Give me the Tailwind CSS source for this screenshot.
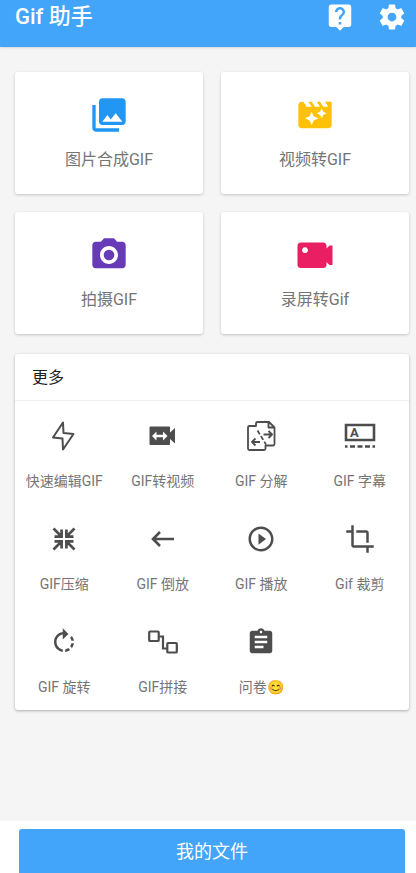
<!DOCTYPE html>
<html lang="zh-CN">
<head>
<meta charset="utf-8">
<meta name="viewport" content="width=device-width, initial-scale=1">
<title>Gif 助手</title>
<script src="https://cdn.jsdelivr.net/npm/@tailwindcss/browser@4"></script>
</head>
<body class="flex min-h-screen flex-col bg-[#f5f5f5] font-[Roboto,'Noto_Sans_CJK_SC',sans-serif] text-[#757575]">
<header class="flex items-center bg-[#42a5f9] pt-[2px] pr-[9px] pb-[15px] pl-[15px] text-white shadow-sm">
  <h1 class="flex-1 text-[22px] leading-[30px] font-medium">Gif 助手</h1>
  <div class="flex gap-[22px]">
    <button type="button" aria-label="帮助"><svg class="size-[30px]" viewBox="0 0 24 24" fill="currentColor"><path d="M19 2H5c-1.110 0-2 .9-2 2v14c0 1.100.89 2 2 2h4l3 3 3-3h4c1.100 0 2-.9 2-2V4c0-1.100-.9-2-2-2zm-6 16h-2v-2h2v2zm2.070-7.750l-.9.92C13.450 11.900 13 12.500 13 14h-2v-.5c0-1.100.45-2.100 1.170-2.830l1.240-1.260c.37-.36.59-.86.59-1.410 0-1.100-.9-2-2-2s-2 .9-2 2H8c0-2.210 1.790-4 4-4s4 1.790 4 4c0 .88-.36 1.680-.93 2.250z"/></svg></button>
    <button type="button" aria-label="设置"><svg class="size-[30px]" viewBox="0 0 24 24" fill="currentColor"><path d="M19.430 12.980c.04-.32.07-.64.07-.98s-.03-.66-.07-.98l2.110-1.650c.19-.15.24-.42.12-.64l-2-3.460c-.12-.22-.39-.3-.61-.22l-2.490 1c-.52-.4-1.080-.73-1.690-.98l-.38-2.650C14.460 2.180 14.250 2 14 2h-4c-.25 0-.46.18-.49.42l-.38 2.650c-.61.25-1.170.59-1.690.98l-2.490-1c-.23-.09-.49 0-.61.22l-2 3.460c-.13.22-.07.49.12.64l2.110 1.650c-.04.32-.07.65-.07.98s.03.66.07.98l-2.110 1.650c-.19.15-.24.42-.12.64l2 3.460c.12.22.39.3.61.22l2.490-1c.52.4 1.080.73 1.690.98l.38 2.650c.03.24.24.42.49.42h4c.25 0 .46-.18.49-.42l.38-2.650c.61-.25 1.170-.59 1.690-.98l2.490 1c.23.09.49 0 .61-.22l2-3.460c.12-.22.07-.49-.12-.64l-2.110-1.650zM12 15.500c-1.930 0-3.500-1.570-3.500-3.500s1.570-3.500 3.500-3.500 3.500 1.570 3.500 3.500-1.570 3.500-3.500 3.500z"/></svg></button>
  </div>
</header>

<main class="flex flex-1 flex-col gap-5 pt-[25px] pr-[7px] pb-5 pl-[15px]">
  <div class="grid grid-cols-2 gap-[18px]">
    <button type="button" class="flex flex-col items-center gap-[13px] rounded-[3px] bg-white pt-[23px] pb-[22px] shadow-[0_1px_3px_rgba(0,0,0,0.2)]">
      <svg class="size-10 text-[#2196f3]" viewBox="0 0 24 24" fill="currentColor"><path d="M22 16V4c0-1.100-.9-2-2-2H8c-1.100 0-2 .9-2 2v12c0 1.100.9 2 2 2h12c1.100 0 2-.9 2-2zm-11-4l2.030 2.710L16 11l4 5H8l3-4zM2 6v14c0 1.100.9 2 2 2h14v-2H4V6H2z"/></svg>
      <span class="text-base">图片合成GIF</span>
    </button>
    <button type="button" class="flex flex-col items-center gap-[13px] rounded-[3px] bg-white pt-[23px] pb-[22px] shadow-[0_1px_3px_rgba(0,0,0,0.2)]">
      <svg class="size-10 text-[#ffc107]" viewBox="0 0 24 24" fill="currentColor"><path d="M18 4l2 3h-3l-2-3h-2l2 3h-3l-2-3H8l2 3H7L5 4H4c-1.100 0-1.990.9-1.990 2L2 18c0 1.100.9 2 2 2h16c1.100 0 2-.9 2-2V4h-4zm-6.750 11.250L10 18l-1.250-2.750L6 14l2.750-1.250L10 10l1.250 2.750L14 14l-2.750 1.250zm5.690-3.310L16 14l-.94-2.060L13 11l2.060-.94L16 8l.94 2.060L19 11l-2.060.94z"/></svg>
      <span class="text-base">视频转GIF</span>
    </button>
    <button type="button" class="flex flex-col items-center gap-[13px] rounded-[3px] bg-white pt-[23px] pb-[22px] shadow-[0_1px_3px_rgba(0,0,0,0.2)]">
      <svg class="size-10 text-[#673ab7]" viewBox="0 0 24 24" fill="currentColor"><circle cx="12" cy="12" r="3.200"/><path d="M9 2L7.170 4H4c-1.100 0-2 .9-2 2v12c0 1.100.9 2 2 2h16c1.100 0 2-.9 2-2V6c0-1.100-.9-2-2-2h-3.170L15 2H9zm3 15.400c-2.980 0-5.400-2.420-5.400-5.400s2.420-5.400 5.400-5.400 5.400 2.420 5.400 5.400-2.420 5.400-5.400 5.400z"/></svg>
      <span class="text-base">拍摄GIF</span>
    </button>
    <button type="button" class="flex flex-col items-center gap-[13px] rounded-[3px] bg-white pt-[23px] pb-[22px] shadow-[0_1px_3px_rgba(0,0,0,0.2)]">
      <svg class="size-10 text-[#e91e63]" viewBox="0 0 40 40" fill="currentColor"><path fill-rule="evenodd" d="M6 7.500H28Q31.500 7.500 31.500 11V13.500L34.500 10.500H37.500V30H34.500L31.500 27V29.500Q31.500 33 28 33H6Q2.500 33 2.500 29.500V11Q2.500 7.500 6 7.500zM10 12.300a2.900 2.900 0 1 0 .01 0z"/></svg>
      <span class="text-base">录屏转Gif</span>
    </button>
  </div>

  <section class="rounded-[3px] bg-white shadow-[0_1px_3px_rgba(0,0,0,0.3)]">
    <h2 class="border-b border-[#f0f0f0] px-[17px] pt-3 pb-[10px] text-base text-[#212121]">更多</h2>
    <div class="grid grid-cols-4 text-sm text-[#757575]">
      <button type="button" class="flex flex-col items-center gap-5 pt-5 pb-[13px]">
        <svg class="size-[30px] text-[#4d4d4d]" viewBox="0 0 30 30" fill="none" stroke="currentColor" stroke-width="2" stroke-linejoin="round"><path d="M14 1.500L4 16.500L13.500 17.500L14 28.500L24.500 13L14.500 12z"/></svg>
        <span>快速编辑GIF</span>
      </button>
      <button type="button" class="flex flex-col items-center gap-5 pt-5 pb-[13px]">
        <svg class="size-[30px] text-[#4d4d4d]" viewBox="0 0 30 30" fill="currentColor"><path d="M2.500 5.500h18.500q1 0 1 1v5l5-4.500v15.500l-5-4.500v5q0 1-1 1H2.500q-1 0-1-1V6.500q0-1 1-1z"/><path fill="#fff" d="M4 15l4.500-4.500v3.200h6.500v-3.200l4.500 4.500-4.500 4.500v-3.200H8.500v3.200z"/></svg>
        <span>GIF转视频</span>
      </button>
      <button type="button" class="flex flex-col items-center gap-5 pt-5 pb-[13px]">
        <svg class="size-[30px] text-[#4d4d4d]" viewBox="0 0 30 30" fill="none" stroke="currentColor" stroke-width="1.800" stroke-linejoin="round"><path d="M10 5H3.500Q2 5 2 6.500V27.500Q2 29 3.500 29H18Q19.500 29 19.500 27.500V24.500H27Q28.500 24.500 28.500 23V6.500L23 1H11.500Q10 1 10 2.500V5zM22.500 1.500V6.500H28"/><path d="M11.500 9.500L20 23.500" stroke-dasharray="4.500 2"/><path d="M17.500 13.500H26M22.500 10L26 13.500L22.500 17M14 21H6M9.500 17.500L6 21L9.500 24.500"/></svg>
        <span>GIF 分解</span>
      </button>
      <button type="button" class="flex flex-col items-center gap-5 pt-5 pb-[13px]">
        <svg class="size-[30px] overflow-visible text-[#4d4d4d]" viewBox="0 0 30 30" fill="none" stroke="currentColor" stroke-width="2.600"><path d="M1 4H29V19H1z"/><path d="M0 25.500H2.500M5 25.500H10M12.500 25.500H17.500M20 25.500H25M27.500 25.500H30"/><text x="5" y="16" class="text-[13px] font-bold" fill="currentColor" stroke="none">A</text></svg>
        <span>GIF 字幕</span>
      </button>
      <button type="button" class="flex flex-col items-center gap-5 pt-5 pb-[13px]">
        <svg class="size-[30px] text-[#4d4d4d]" viewBox="0 0 30 30" fill="none" stroke="currentColor" stroke-width="2.700"><path d="M4.500 4.500L12 12M5.500 12.600H12.600V5.500M25.500 4.500L18 12M24.500 12.600H17.400V5.500M4.500 25.500L12 18M5.500 17.400H12.600V24.500M25.500 25.500L18 18M24.500 17.400H17.400V24.500"/></svg>
        <span>GIF压缩</span>
      </button>
      <button type="button" class="flex flex-col items-center gap-5 pt-5 pb-[13px]">
        <svg class="size-[30px] text-[#4d4d4d]" viewBox="0 0 30 30" fill="none" stroke="currentColor" stroke-width="2.600"><path d="M26 15H5.500M12 8L5 15L12 22"/></svg>
        <span>GIF 倒放</span>
      </button>
      <button type="button" class="flex flex-col items-center gap-5 pt-5 pb-[13px]">
        <svg class="size-[30px] text-[#4d4d4d]" viewBox="0 0 24 24" fill="currentColor"><path d="M10 16.500l6-4.500-6-4.500v9zM12 2C6.480 2 2 6.480 2 12s4.480 10 10 10 10-4.480 10-10S17.520 2 12 2zm0 18c-4.410 0-8-3.590-8-8s3.590-8 8-8 8 3.590 8 8-3.590 8-8 8z"/></svg>
        <span>GIF 播放</span>
      </button>
      <button type="button" class="flex flex-col items-center gap-5 pt-5 pb-[13px]">
        <svg class="size-[30px] text-[#4d4d4d]" viewBox="0 0 24 24" fill="currentColor"><path d="M17 15h2V7c0-1.100-.9-2-2-2H9v2h8v8zM7 17V1H5v4H1v2h4v10c0 1.100.9 2 2 2h10v4h2v-4h4v-2H7z"/></svg>
        <span>Gif 裁剪</span>
      </button>
      <button type="button" class="flex flex-col items-center gap-5 pt-5 pb-[13px]">
        <svg class="size-[30px] text-[#4d4d4d]" viewBox="0 0 24 24" fill="currentColor"><path d="M15.550 5.550L11 1v3.070C7.060 4.560 4 7.920 4 12s3.050 7.440 7 7.930v-2.020c-2.840-.48-5-2.940-5-5.910s2.160-5.430 5-5.910V10l4.550-4.450zM19.930 11c-.17-1.390-.72-2.730-1.620-3.890l-1.420 1.420c.54.75.88 1.600 1.020 2.470h2.020zM13 17.900v2.020c1.390-.17 2.740-.71 3.900-1.610l-1.440-1.440c-.75.54-1.590.89-2.460 1.030zm3.890-2.420l1.420 1.410c.9-1.160 1.450-2.500 1.620-3.890h-2.020c-.14.87-.48 1.720-1.020 2.480z"/></svg>
        <span>GIF 旋转</span>
      </button>
      <button type="button" class="flex flex-col items-center gap-5 pt-5 pb-[13px]">
        <svg class="size-[30px] text-[#4d4d4d]" viewBox="0 0 30 30" fill="none" stroke="currentColor" stroke-width="2.200"><rect x="1.200" y="4.500" width="9.500" height="9.500" rx=".8"/><rect x="19.300" y="16" width="9.500" height="9.500" rx=".8"/><path d="M10.500 9.500H15V21.500H19.500"/></svg>
        <span>GIF拼接</span>
      </button>
      <button type="button" class="flex flex-col items-center gap-5 pt-5 pb-[13px]">
        <svg class="size-[30px] text-[#4d4d4d]" viewBox="0 0 24 24" fill="currentColor"><path d="M19 3h-4.180C14.400 1.840 13.300 1 12 1c-1.300 0-2.400.84-2.820 2H5c-1.100 0-2 .9-2 2v14c0 1.100.9 2 2 2h14c1.100 0 2-.9 2-2V5c0-1.100-.9-2-2-2zm-7 0c.55 0 1 .45 1 1s-.45 1-1 1-1-.45-1-1 .45-1 1-1zm2 14H7v-2h7v2zm3-4H7v-2h10v2zm0-4H7V7h10v2z"/></svg>
        <span>问卷😊</span>
      </button>
    </div>
  </section>
</main>

<footer class="bg-white pt-2 pr-[11px] pl-[19px]">
  <button type="button" class="block w-full rounded-t-[3px] bg-[#42a5f9] pt-[9px] pb-[7px] text-lg text-white">我的文件</button>
</footer>
</body>
</html>
